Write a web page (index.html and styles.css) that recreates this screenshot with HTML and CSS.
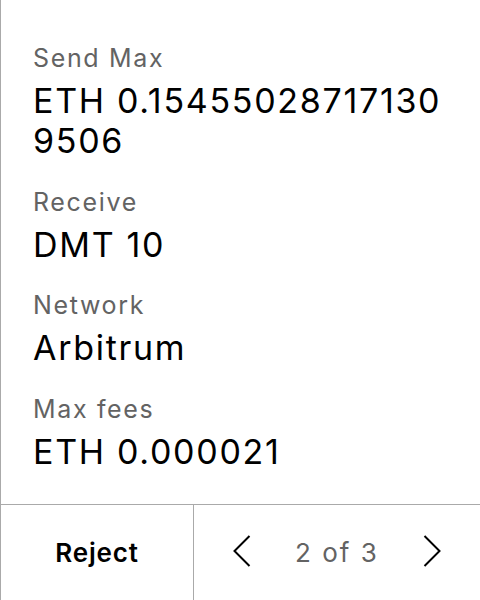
FILE: index.html
```html
<!DOCTYPE html>
<html>
<head>
<meta charset="utf-8">
<link rel="stylesheet" href="styles.css">
</head>
<body>
<div class="page">
  <div class="details">
    <div class="item">
      <div class="label">Send Max</div>
      <div class="value">ETH 0.15455028717130<br>9506</div>
    </div>
    <div class="item">
      <div class="label">Receive</div>
      <div class="value">DMT 10</div>
    </div>
    <div class="item">
      <div class="label">Network</div>
      <div class="value">Arbitrum</div>
    </div>
    <div class="item">
      <div class="label">Max fees</div>
      <div class="value">ETH 0.000021</div>
    </div>
  </div>
  <div class="footer">
    <div class="reject">Reject</div>
    <div class="pager">
      <svg class="chev" width="18" height="32" viewBox="0 0 18 32"><polyline points="16.5,1 1.5,16 16.5,31" fill="none" stroke="#000" stroke-width="2"/></svg>
      <span class="count">2 of 3</span>
      <svg class="chev" width="18" height="32" viewBox="0 0 18 32"><polyline points="1.5,1 16.5,16 1.5,31" fill="none" stroke="#000" stroke-width="2"/></svg>
    </div>
  </div>
</div>
</body>
</html>
```

FILE: styles.css
```css
html, body {
  margin: 0;
  padding: 0;
  background: #fff;
}
body {
  font-family: Inter, "Noto Sans", sans-serif;
  color: #000;
}
.page {
  width: 480px;
  height: 600px;
  box-sizing: border-box;
  border-left: 1px solid #aaa;
  display: flex;
  flex-direction: column;
}
.details {
  flex: 1;
  padding: 42px 0 0 32px;
  display: flex;
  flex-direction: column;
  gap: 24.5px;
}
.label {
  font-size: 25px;
  line-height: 32px;
  letter-spacing: 1.65px;
  color: #636363;
  margin-bottom: 7px;
}
.value {
  font-size: 34px;
  line-height: 40px;
  letter-spacing: 1.7px;
  color: #000;
}
.footer {
  height: 96px;
  box-sizing: border-box;
  border-top: 1px solid #aaa;
  display: flex;
}
.reject {
  width: 192px;
  border-right: 1px solid #aaa;
  display: flex;
  align-items: center;
  justify-content: center;
  font-size: 26px;
  font-weight: 600;
  letter-spacing: 0.8px;
}
.pager {
  flex: 1;
  display: flex;
  align-items: center;
  justify-content: center;
  gap: 44px;
}
.count {
  font-size: 26px;
  letter-spacing: 2px;
  color: #636363;
}
.chev {
  display: block;
  margin-bottom: 3px;
}
```
